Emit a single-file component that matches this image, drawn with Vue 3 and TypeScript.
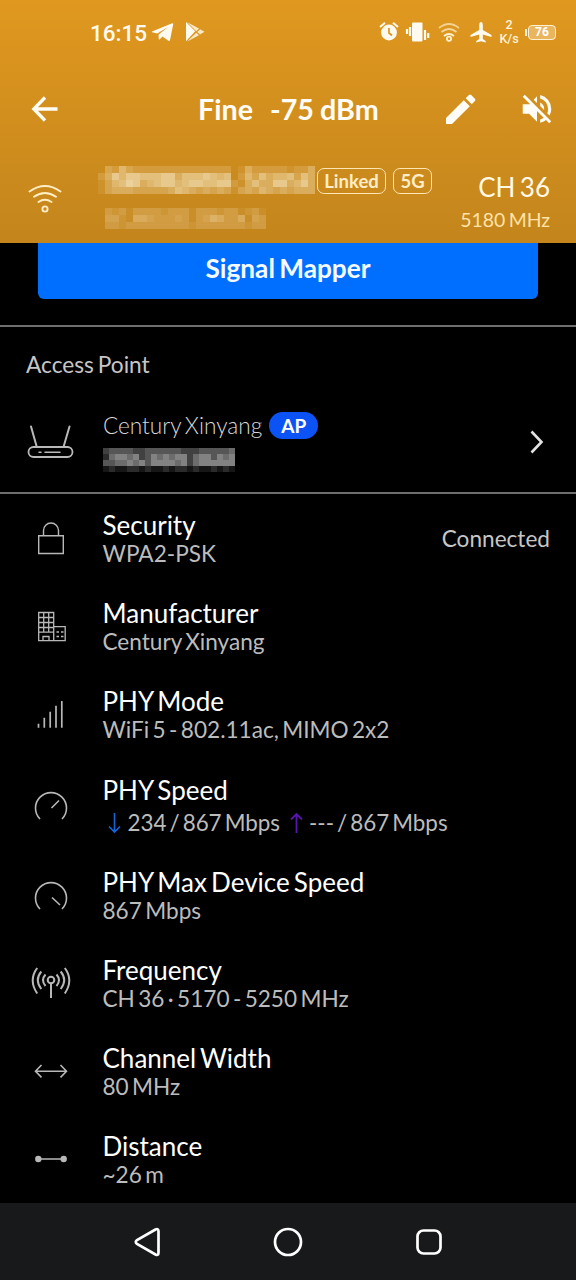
<script setup lang="ts">
interface Row {
  icon: string
  title: string
  sub?: string
  side?: string
}

const rows: Row[] = [
  { icon: 'lock', title: 'Security', sub: 'WPA2-PSK', side: 'Connected' },
  { icon: 'building', title: 'Manufacturer', sub: 'Century Xinyang' },
  { icon: 'bars', title: 'PHY Mode', sub: 'WiFi 5 - 802.11ac, MIMO 2x2' },
  { icon: 'gauge', title: 'PHY Speed' },
  { icon: 'gaugeMax', title: 'PHY Max Device Speed', sub: '867 Mbps' },
  { icon: 'antenna', title: 'Frequency', sub: 'CH 36 · 5170 - 5250 MHz' },
  { icon: 'width', title: 'Channel Width', sub: '80 MHz' },
  { icon: 'distance', title: 'Distance', sub: '~26 m' },
]

// Each digit is the brightness of one block of a redacted value
interface Cell { x: number; y: number; o: number }
function mosaic(lines: string[], gain: number): Cell[] {
  return lines.flatMap((line, y) =>
    [...line].map((c, x) => ({ x, y, o: Number(c) * gain })).filter((c) => c.o > 0),
  )
}
const ssid = mosaic([
  '0325322222222222222014222221224',
  '2475776667746667656025364556364',
  '1356874567756776677214644774574',
  '1344433333465434343134354343444',
], 0.1)
const bssid = mosaic([
  '32313333233313332331231',
  '44215543334313465335143',
  '33233333333323333333233',
], 0.095)
const ip = mosaic([
  '3444433444444333444445',
  '2566563465656635664656',
  '4455656466665635666666',
  '1211221211212212112121',
], 0.1)
</script>

<template>
  <div class="screen">
    <header class="header">
      <div class="status">
        <span class="clock">16:15</span>
        <svg class="telegram" width="23" height="20" viewBox="0 0 23 20"><path d="M1 9.5 21.2 1.2Q22.4 1 22.2 2.2L19 18.3Q18.6 19.6 17.3 18.8L11.5 14.6 8.5 17.4Q7.8 17.8 7.7 16.8L7.6 12.6 17.2 5 6.2 11.6 1.2 10.3Q.4 10 1 9.5Z" fill="#fffbf0" /></svg>
        <svg class="play" width="20" height="20" viewBox="0 0 20 20"><path d="M1 0 10.2 9.2 1 19.3Z" fill="#fffbf0" /><path d="M2.2.2 14 6.6 11.2 9.3ZM2.2 19.5 11.2 10.8 14 13.2ZM15 7.2 19.5 9.8 15 12.6 12.2 10Z" fill="#fff4dc" opacity=".88" /></svg>
        <div class="status-right">
          <svg width="120" height="28" viewBox="0 0 120 28">
            <g fill="#fffaf0">
              <circle cx="10" cy="14.5" r="7.9" />
              <path d="m1 9 5-4.3M19 9l-5-4.3" stroke="#fffaf0" stroke-width="2" />
              <path d="M10 10v5l3 2.5" stroke="#dc951f" stroke-width="1.7" fill="none" />
              <rect x="33" y="4.5" width="10.5" height="19" rx="1" />
              <path d="M31 9v9M28 11v5M46 12v10M49.2 15v5" stroke="#fffaf0" stroke-width="2.2" />
            </g>
            <g fill="none" stroke="#fff1d0">
              <path d="M60 10q10-8 20 0" stroke-width="1.8" opacity=".65" />
              <path d="M62.5 14q7.5-6 15 0" stroke-width="1.8" opacity=".7" />
              <path d="M65 18q5-4 10 0" stroke-width="1.8" />
              <circle cx="70" cy="20.7" r="2.1" stroke-width="1.8" />
            </g>
            <path transform="translate(1 0)" d="M101 4q1.800 0 1.800 2.700v5.200l8.700 5v2.200l-8.700-2.500v4.400l2.900 1.900v1.500l-4.700-1.200-4.700 1.200v-1.500l2.900-1.900v-4.400l-8.700 2.500v-2.200l8.700-5V6.700Q99.200 4 101 4Z" fill="#fffaf0" />
          </svg>
          <span class="rate"><span>2</span><span>K/s</span></span>
          <span class="battery-tip" />
          <span class="battery">76</span>
        </div>
      </div>

      <div class="toolbar">
        <svg width="28" height="28" viewBox="0 0 28 28" class="back"><path d="M26.500 14H3M14 2.500 2.800 14 14 25.500" fill="none" stroke="#fffdf5" stroke-width="3.300" /></svg>
        <h1><span>Fine</span><span>-75 dBm</span></h1>
        <svg class="edit" width="30" height="30" viewBox="0 0 30 30"><path d="M0 24v6h6L23.800 12.200l-6-6ZM28.900 7.100Q30 6 28.900 4.800L25.200 1.100Q24 0 22.900 1.100L19.700 4.200l6 6Z" fill="#fffdf5" /></svg>
        <svg class="mute" width="38" height="38" viewBox="0 0 24 24" fill="#fffdf5"><path d="M16.500 12A4.500 4.500 0 0 0 14 7.970v2.210l2.450 2.450c.03-.2.050-.41.050-.63Zm2.500 0c0 .940-.2 1.820-.54 2.640l1.510 1.510A8.800 8.800 0 0 0 21 12a9 9 0 0 0-7-8.770v2.060A7 7 0 0 1 19 12ZM4.270 3 3 4.270 7.730 9H3v6h4l5 5v-6.730l4.250 4.250c-.67.520-1.420.930-2.250 1.180v2.060a9 9 0 0 0 3.690-1.810L19.730 21 21 19.730l-9-9ZM12 4 9.910 6.090 12 8.180Z" /></svg>
      </div>

      <div class="network">
        <svg class="wifi" width="34" height="30" viewBox="0 0 34 30" fill="none" stroke="#ffedc4" stroke-width="1.900" stroke-linecap="round"><path d="M1.500 7.500Q17-3.500 32.500 7.500M6 12.700q11-7.500 22 0M10.500 18q6.500-4.500 13 0" /><circle cx="17" cy="25" r="2.600" /></svg>
        <div class="ids">
          <div class="name-line">
            <svg width="217" height="28" viewBox="0 0 31 4" preserveAspectRatio="none" shape-rendering="crispEdges"><rect v-for="(c, i) in ssid" :key="i" :x="c.x" :y="c.y" width="1" height="1" fill="#f3e3bd" :fill-opacity="c.o" /></svg>
            <span class="tag linked">Linked</span>
            <span class="tag band">5G</span>
          </div>
          <svg class="bssid" width="161" height="21" viewBox="0 0 23 3" preserveAspectRatio="none" shape-rendering="crispEdges"><rect v-for="(c, i) in bssid" :key="i" :x="c.x" :y="c.y" width="1" height="1" fill="#eed3a0" :fill-opacity="c.o" /></svg>
        </div>
        <div class="channel">
          <div class="ch">CH 36</div>
          <div class="mhz">5180 MHz</div>
        </div>
      </div>
    </header>

    <main class="content">
      <button class="mapper" type="button">Signal Mapper</button>
      <section class="ap">
        <h2>Access Point</h2>
        <div class="ap-row">
          <svg class="router" width="48" height="36" viewBox="0 0 48 36" fill="none" stroke="#b9b9b9" stroke-width="1.800" stroke-linecap="round"><path d="M4 2.500 9.800 23M42.500 2.500 36.500 23" stroke-width="2" /><rect x="1.500" y="23" width="44" height="10" rx="5" /><path d="M12 28.200h2M18 28.200h15" stroke-width="1.500" /></svg>
          <div class="ap-text">
            <div class="ap-name"><span>Century Xinyang</span><b>AP</b></div>
            <svg class="ip" width="132" height="24" viewBox="0 0 22 4" preserveAspectRatio="none" shape-rendering="crispEdges"><rect v-for="(c, i) in ip" :key="i" :x="c.x" :y="c.y" width="1" height="1" fill="#d8d8d8" :fill-opacity="c.o" /></svg>
          </div>
          <svg class="chevron" width="14" height="24" viewBox="0 0 14 24"><path d="m1.500 1.500 10 10.500-10 10.500" fill="none" stroke="#e2e2e2" stroke-width="2.600" /></svg>
        </div>
      </section>

      <section class="rows">
        <div v-for="r in rows" :key="r.title" class="row" :class="{ speed: r.icon === 'gauge' }">
          <svg class="icon" width="44" height="44" viewBox="0 0 44 44" fill="none" stroke="#b8b8b8" stroke-width="1.400">
            <g v-if="r.icon === 'lock'"><path d="M9.700 19.700h24.600v17.800H9.700ZM14.500 19.500v-5a7.500 7.500 0 0 1 15 0v5" /></g>
            <g v-else-if="r.icon === 'building'" stroke-width="1.300"><path d="M9.700 8.500h15v28.200h-15ZM24.700 22.700h11.500v14H24.700M14.700 8.500v20M19.700 8.500v20M9.700 13.500h15M9.700 18.500h15M9.700 23.500h15M9.700 28.200h15M14 36v-3.500h6V36M27.500 28h2.500M32 28h2.500M27.500 32.500h2.500M32 32.500h2.500" /></g>
            <g v-else-if="r.icon === 'bars'" stroke-width="1.700"><path d="M9.500 35.800v-4M15.300 35.800v-10M21.200 35.800v-16M27 35.800v-22M32.800 35.800V9" /></g>
            <g v-else-if="r.icon === 'gauge' || r.icon === 'gaugeMax'" stroke-width="1.600"><path d="M11 36a15.500 15.500 0 1 1 22 0" /><path :d="r.icon === 'gauge' ? 'm22.500 25 7.500-7.500' : 'm23 24.500 8 7.500'" /></g>
            <g v-else-if="r.icon === 'antenna'" transform="translate(0 -1)" stroke-width="2"><circle cx="22" cy="20" r="3.300" /><path d="M22 23.500V38M16.500 14.500q-5 5.500 0 11.500M27.500 14.500q5 5.500 0 11.500M12.300 11.500q-7 8.500 0 17.500M31.700 11.500q7 8.500 0 17.500M8.200 8q-9 12 0 25.500M35.800 8q9 12 0 25.500" /></g>
            <g v-else-if="r.icon === 'width'" stroke-width="1.600"><path d="M6.500 22.200h31M12.500 16l-6 6.200 6 6.200M31.500 16l6 6.200-6 6.200" /></g>
            <g v-else><path d="M9 22h26" stroke-width="1.500" /><circle cx="9.300" cy="22" r="3.200" fill="#b8b8b8" stroke="none" /><circle cx="34.700" cy="22" r="3.200" fill="#b8b8b8" stroke="none" /></g>
          </svg>
          <div class="text">
            <div class="title">{{ r.title }}</div>
            <div v-if="r.sub" class="sub">{{ r.sub }}</div>
            <div v-else class="sub rates">
              <svg class="down" width="15" height="22" viewBox="0 0 15 22"><path d="M7.500 1v19M2 14.500l5.500 5.500 5.500-5.500" fill="none" stroke="#1763d8" stroke-width="1.600" /></svg>
              <span>234 / 867 Mbps</span>
              <svg class="up" width="15" height="22" viewBox="0 0 15 22"><path d="M7.500 21V2M2 7.500 7.500 2 13 7.500" fill="none" stroke="#5915ae" stroke-width="1.800" /></svg>
              <span>--- / 867 Mbps</span>
            </div>
          </div>
          <div v-if="r.side" class="side">{{ r.side }}</div>
        </div>
      </section>
    </main>

    <nav class="nav">
      <svg width="28" height="32" viewBox="0 0 28 32"><path d="M22.500 3.500Q25.500 2 25.500 5.500v21Q25.500 30 22.500 28.500L4 18Q1.500 16 4 14Z" fill="none" stroke="#fff" stroke-width="2.700" /></svg>
      <svg width="30" height="30" viewBox="0 0 30 30"><circle cx="15" cy="15" r="13" fill="none" stroke="#fff" stroke-width="2.700" /></svg>
      <svg width="28" height="28" viewBox="0 0 28 28"><rect x="2.500" y="2.500" width="23" height="23" rx="6" fill="none" stroke="#fff" stroke-width="2.700" /></svg>
    </nav>
  </div>
</template>

<style>
body { margin: 0; background: #000; }
</style>

<style scoped>
* { box-sizing: border-box; }
.screen { width: 576px; height: 1280px; display: flex; flex-direction: column; background: #000; color: #fff; font-family: Lato, "Open Sans", sans-serif; overflow: hidden; white-space: nowrap; }
.header { height: 243px; flex: none; background: linear-gradient(#e0981f, #c3851c); }
.status { height: 64px; display: flex; align-items: center; padding-left: 90px; }
.clock { width: 61px; font: 500 22.500px/28px Roboto, sans-serif; color: #fffaf0; padding-top: 1px; }
.play { margin-left: 11px; }
.status-right { margin-left: auto; display: flex; align-items: center; width: 197px; }
.status-right > svg { margin-right: -2px; flex: none; }
.rate { width: 24px; display: flex; flex-direction: column; align-items: center; font: 500 12.500px/14px Roboto, sans-serif; color: #fff3d7; }
.rate span { height: 14px; }
.rate span:first-child { height: 13px; line-height: 12px; }
.battery-tip { width: 2px; height: 7px; margin-left: 4px; background: #fff1d0; }
.battery { width: 28px; height: 15px; margin-left: 1px; border: 1.500px solid #fff1d0; border-radius: 4px; background: #e9b65f; font: 700 12px/13px Roboto, sans-serif; text-align: center; }
.toolbar { height: 90px; display: flex; align-items: center; padding-left: 31px; }
h1 { margin: -1px 0 0 139px; font-size: 28.700px; line-height: 34px; font-weight: 700; display: flex; gap: 17px; width: 182px; color: #fffdf5; word-spacing: -1px; }
.edit { margin-left: 66px; }
.mute { margin-left: 42px; }
.network { height: 89px; display: flex; padding: 12px 26px 0 28px; }
.wifi { margin-top: 18px; }
.ids { margin-left: 36px; }
.name-line { display: flex; }
.tag { height: 26px; margin-top: 2px; border: 1.500px solid #ffe6b2; border-radius: 7px; font-size: 18.500px; line-height: 24px; font-weight: 700; text-align: center; color: #ffedc8; }
.linked { width: 69px; margin-left: 2px; }
.band { width: 39px; margin-left: 7px; }
.bssid { display: block; margin: 14px 0 0 7px; }
.channel { margin-left: auto; text-align: right; }
.ch { font-size: 26px; line-height: 32px; margin-top: 5px; color: #fff9e8; word-spacing: -2.300px; }
.mhz { font-size: 19.400px; line-height: 28px; margin-top: 3px; color: #ffe2a8; word-spacing: -1.500px; }
.content { height: 960px; }
.mapper { display: block; width: 500px; height: 56px; margin: 0 0 0 38px; padding: 0 0 7px; border: 0; border-radius: 0 0 6px 6px; background: #006fff; color: #f4faff; font: 700 26.200px/30px Lato, sans-serif; word-spacing: -2px; }
.ap { margin-top: 26px; height: 169px; border-top: 2px solid #6e6e6e; border-bottom: 2px solid #6e6e6e; }
h2 { margin: 24px 0 0 26px; font-size: 22.700px; font-weight: 400; line-height: 28px; color: #c6c6c6; word-spacing: -2px; }
.ap-row { display: flex; padding: 30px 32px 0 27px; }
.router { margin-top: 15px; }
.ap-text { margin-left: 28px; }
.ap-name { display: flex; align-items: center; height: 32px; font-size: 22.600px; font-weight: 300; color: #d8d8d8; word-spacing: -2.300px; }
.ap-name b { width: 49px; height: 27px; margin-left: 7px; border-radius: 14px; background: #0c53f5; color: #fff; font-size: 19px; line-height: 27px; font-weight: 700; text-align: center; }
.ip { display: block; margin-top: 7px; }
.chevron { margin: 21px 0 0 auto; }
.row { height: 88px; display: flex; align-items: center; padding: 0 26px 0 29px; }
.speed { height: 93px; }
.icon { flex: none; }
.text { margin-left: 29.500px; padding-top: 2px; }
.title { font-size: 26px; line-height: 28px; word-spacing: -2.500px; }
.sub { font-size: 22.600px; line-height: 28px; padding-top: 1px; margin-bottom: -1px; color: #bcbcbc; word-spacing: -2.400px; }
.rates { display: flex; align-items: center; margin-top: 4px; font-size: 22.400px; word-spacing: -2.700px; }
.down { margin: 0 6px 0 4px; }
.up { margin: 0 5px 0 9px; }
.side { margin-left: auto; font-size: 22.600px; color: #c6c6c6; }
.nav { height: 77px; flex: none; background: #18191b; display: flex; justify-content: space-between; align-items: center; padding: 0 133px; }
</style>
